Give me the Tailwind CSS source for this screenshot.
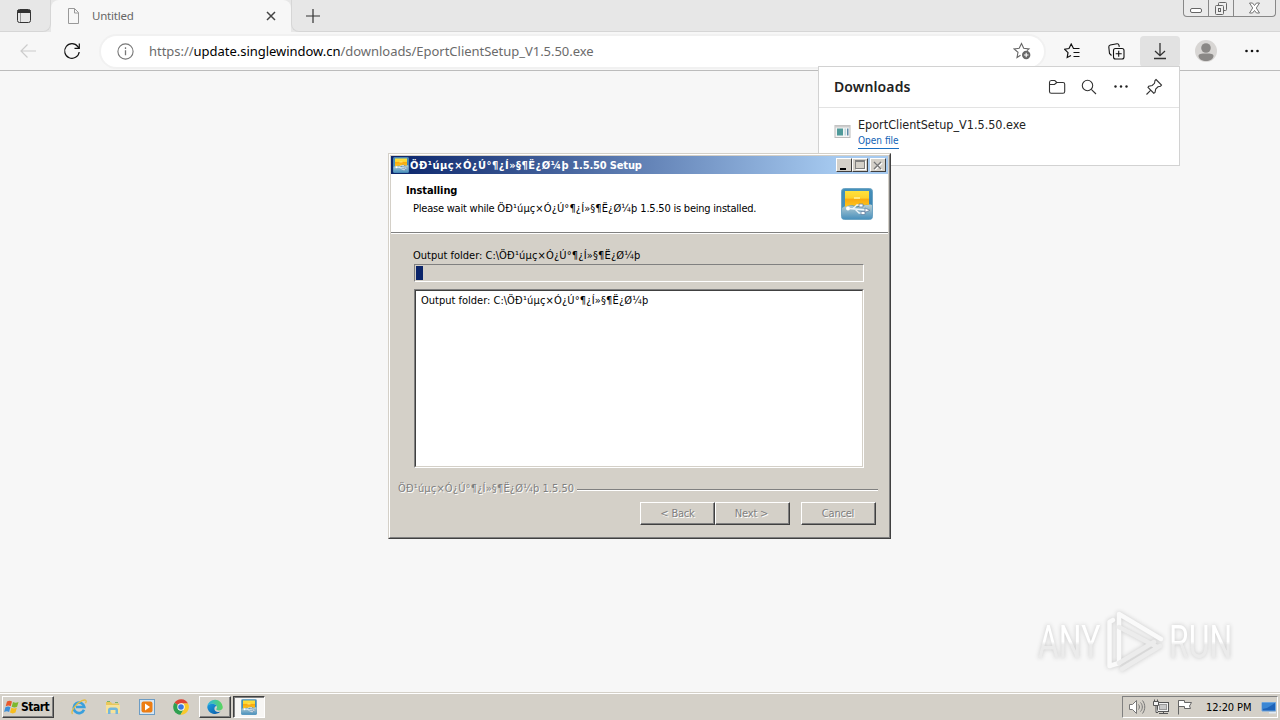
<!DOCTYPE html>
<html lang="en">
<head>
  <meta charset="UTF-8" />
  <meta name="viewport" content="width=device-width, initial-scale=1.0"/>
  <title>Untitled</title>
  <script src="https://cdn.jsdelivr.net/npm/@tailwindcss/browser@4"></script>
</head>
<body class="relative flex flex-col w-[1280px] h-[720px] overflow-hidden bg-[#f7f7f7] font-['DejaVu_Sans_Condensed','DejaVu_Sans',sans-serif] text-[11px] text-black whitespace-nowrap">

  <!-- Shared icons -->
  <svg class="absolute w-0 h-0">
    <defs>
      <linearGradient id="frame" x1="0" y1="0" x2="1" y2="1"><stop offset="0" stop-color="#3f8fbb"/><stop offset=".4" stop-color="#4a92bb"/><stop offset="1" stop-color="#2f7cae"/></linearGradient>
      <linearGradient id="sun" x1="0" y1="0" x2="0" y2="1"><stop offset="0" stop-color="#ffe23c"/><stop offset=".45" stop-color="#fdd22c"/><stop offset=".5" stop-color="#f9a90f"/><stop offset="1" stop-color="#ffc61c"/></linearGradient>
      <linearGradient id="haze" x1="0" y1="0" x2="0" y2="1"><stop offset="0" stop-color="#b9cfd4"/><stop offset="1" stop-color="#4a91bd"/></linearGradient>
      <linearGradient id="edge" x1="0" y1="0" x2="1" y2="1"><stop offset="0" stop-color="#1b9de2"/><stop offset="1" stop-color="#0c59a4"/></linearGradient>
      <linearGradient id="edgeTop" x1="0" y1="0" x2="1" y2="0"><stop offset="0" stop-color="#2cb5e8"/><stop offset="1" stop-color="#5bd65a"/></linearGradient>
    </defs>
    <symbol id="app" viewBox="0 0 32 32">
      <rect x=".5" y=".5" width="31" height="31" rx="3" fill="url(#frame)" stroke="#6fa5c4"/>
      <path d="M1 20c5-3 9-3 13-1s10-4 17-2v12c0 1.500-1 2-2 2H3c-1.500 0-2-.8-2-2z" fill="url(#haze)"/>
      <path d="M4 3h24v14c-6-1-8 2-13 1s-7-1-11 1z" fill="url(#sun)"/>
      <path d="M13 10h6" stroke="#fff3a0" stroke-width="1.500"/>
      <circle cx="7" cy="20.500" r="2" fill="#fff"/>
      <path d="M8 20.500l17 1.500M12 20.500l4-3.500h4M14 21l4 4h4" fill="none" stroke="#eef6fb" stroke-width="1.300"/>
      <path d="M18 16h4v3h-4zM20 23.500h4v3h-4zM24 20l5 2.300-5 2z" fill="#fff" stroke="#6784a5" stroke-width=".8"/>
    </symbol>
  </svg>

  <!-- Tab strip -->
  <header class="flex h-[32px] shrink-0 bg-[#e7e7e7]">
    <div class="flex w-[51px] justify-center pt-[8px] rounded-br-lg border-r border-b border-[#d6d6d6]">
      <svg class="w-4 h-4 -ml-[2px]" viewBox="0 0 16 16" fill="none" stroke="#333"><rect x="1.500" y="1.500" width="13" height="13" rx="2"/><path d="M1.500 3.500h13" stroke-width="3"/><path d="M4.500 5v9" stroke="#999"/></svg>
    </div>
    <div class="flex w-[240px] items-center rounded-t-lg bg-[#f7f7f7] pl-[15px] pr-[13px]">
      <svg class="w-4 h-4" viewBox="0 0 16 16" fill="none" stroke="#999"><path d="M2.500.500h6l4 4v11h-10zM8.500.500v4.500h4"/></svg>
      <span class="ml-[10px] font-['Noto_Sans',sans-serif] text-[11.500px] tracking-[-0.2px] text-[#666]">Untitled</span>
      <svg class="ml-auto w-[14px] h-[14px]" viewBox="0 0 14 14" stroke="#444" stroke-width="1.500"><path d="M3 3l8 8M11 3l-8 8"/></svg>
    </div>
    <div class="flex flex-1 justify-between rounded-bl-lg border-l border-b border-[#d6d6d6] pl-[13px] pr-[4px]">
      <svg class="mt-[8px] w-4 h-4" viewBox="0 0 16 16" stroke="#333" stroke-width="1.200"><path d="M1 8h14M8 1v14"/></svg>
      <div class="flex w-[93px] h-[17px] border border-t-0 border-[#888] rounded-b-[4px] bg-[#ebebeb]">
        <div class="w-[25px] border-r border-[#888] pl-[5px] pt-[7px]"><svg class="w-[14px] h-[7px]" viewBox="0 0 14 7" fill="#fff" stroke="#666"><rect x="1.500" y="1.500" width="11" height="4" rx="1.500"/></svg></div>
        <div class="w-[25px] border-r border-[#888] pl-[4px] pt-[1px]"><svg class="w-[16px] h-[14px]" viewBox="0 0 16 14" fill="#eee" stroke="#666"><rect x="5.500" y="1.500" width="8" height="8" rx="1"/><rect x="2.500" y="4.500" width="8" height="9" rx="1"/><rect x="5.500" y="7.500" width="2" height="3"/></svg></div>
        <div class="flex-1 pl-[14px] pt-[2px]"><svg class="w-[13px] h-[12px]" viewBox="0 0 13 12" fill="#fff" stroke="#666" stroke-width=".9"><path d="M1.500 1h3l2 2.500L8.500 1h3L8.300 6l3.200 5h-3L6.500 8.500 4.500 11h-3L4.700 6z"/></svg></div>
      </div>
    </div>
  </header>

  <!-- Toolbar -->
  <nav class="flex h-[39px] shrink-0 items-center border-b border-[#bcbcbc] bg-[#f7f7f7] pl-[19px]">
    <svg class="w-[18px] h-[18px]" viewBox="0 0 18 18" fill="none" stroke="#ccc" stroke-width="1.200"><path d="M17 9H2M8.500 2.500L2 9l6.500 6.500"/></svg>
    <svg class="ml-[26px] w-[18px] h-[18px]" viewBox="0 0 18 18" fill="none" stroke="#111" stroke-width="1.200"><path d="M16.200 10A7.300 7.300 0 1 1 14.800 4.600L16 6.200M16.300 1.500V6.300H11.500"/></svg>
    <div class="flex w-[943px] h-[31px] ml-[20px] items-center rounded-full bg-white pl-[16px] pr-[13px] shadow-[0_0_0_2px_#f1f1f1]">
      <svg class="w-[17px] h-[17px]" viewBox="0 0 17 17" fill="none" stroke="#777" stroke-width="1.100"><circle cx="8.500" cy="8.500" r="7.600"/><path d="M8.500 7.200v5M8.500 4.300v1.600" stroke-width="1.300"/></svg>
      <p class="ml-[15px] pt-px font-['Noto_Sans',sans-serif] text-[13px] tracking-[-0.03px] text-[#6b6b6b]">https://<span class="text-black">update.singlewindow.cn</span>/downloads/EportClientSetup_V1.5.50.exe</p>
      <svg class="ml-auto w-[18px] h-[18px]" viewBox="0 0 18 18" fill="none" stroke="#666" stroke-width="1.100"><path d="M7.500 13.200L4 15.500l1-5.200L1 6.900l5.200-.6L8.500 1.500l2.200 4.800 5.300.6-2 1.800"/><circle cx="13.200" cy="13" r="4.200" fill="#666" stroke="none"/><path d="M10.900 13h4.600M13.200 10.700v4.600" stroke="#fff"/></svg>
    </div>
    <svg class="ml-[20px] w-4 h-4" viewBox="0 0 16 16" fill="none" stroke="#111" stroke-width="1.200"><path d="M7 12.500L3.200 14.500 4 9.600.5 6.200 5 5.500 7.200 1l2.300 4.500H15.500M9.500 9.500h6M9.500 13.500h6"/></svg>
    <svg class="ml-[28px] w-[17px] h-[17px]" viewBox="0 0 17 17" fill="none" stroke="#111" stroke-width="1.100"><path d="M3.500 12.500L1.500 10.500.8 4C.7 2.800 1.300 2.300 2.300 2L9 .8c1.200-.1 1.800.4 2 1.500l.3 1.500"/><rect x="5.500" y="5.500" width="10.500" height="10.500" rx="2"/><path d="M10.700 7.700v6M7.700 10.700h6"/></svg>
    <div class="flex w-[40px] h-[31px] ml-[15px] items-center justify-center rounded bg-[#e2e2e2]">
      <svg class="w-[14px] h-[18px]" viewBox="0 0 14 18" fill="none" stroke="#333" stroke-width="1.300"><path d="M7 1v12.500M2 9l5 4.700L12 9M1 16.500h12"/></svg>
    </div>
    <svg class="ml-[15px] w-[22px] h-[22px]" viewBox="0 0 22 22" fill="#8a8886"><circle cx="11" cy="11" r="11" fill="#d8d6d4"/><circle cx="11" cy="8" r="4.800"/><path d="M3.500 16c0-2 2.500-2.500 7.500-2.500s7.500.5 7.500 2.500c0 3-4 5-7.500 5s-7.500-2-7.500-5z"/></svg>
    <svg class="ml-[27px] w-4 h-4" viewBox="0 0 16 16" fill="#111"><circle cx="2.500" cy="8" r="1.300"/><circle cx="8" cy="8" r="1.300"/><circle cx="13.500" cy="8" r="1.300"/></svg>
  </nav>

  <main class="flex-1"></main>

  <!-- Downloads flyout -->
  <section class="absolute left-[818px] top-[66px] w-[362px] h-[100px] border border-[#d2d2d2] bg-white">
    <div class="flex h-[41px] items-center border-b border-[#e3e3e3] pl-[15px] pr-[16px]">
      <h2 class="-mt-[2px] font-['Noto_Sans',sans-serif] text-[14px] font-semibold tracking-[0.1px] text-[#222]">Downloads</h2>
      <svg class="ml-auto w-[18px] h-4" viewBox="0 0 18 16" fill="none" stroke="#333" stroke-width="1.100"><path d="M1.500 12.500v-9c0-1.200.6-2 1.800-2h3.500l2 2h6.200c1 0 1.700.7 1.700 1.700v7.300c0 1-.7 1.800-1.700 1.800H3.300c-1.100 0-1.800-.7-1.800-1.800zM1.500 5.500h5l2.300-2"/></svg>
      <svg class="ml-[15px] w-4 h-4" viewBox="0 0 16 16" fill="none" stroke="#333" stroke-width="1.100"><circle cx="6.500" cy="6.500" r="5.200"/><path d="M10.300 10.300l4.700 4.700"/></svg>
      <svg class="ml-[16px] w-4 h-4" viewBox="0 0 16 16" fill="#222"><circle cx="2.500" cy="7.500" r="1.200"/><circle cx="8" cy="7.500" r="1.200"/><circle cx="13.500" cy="7.500" r="1.200"/></svg>
      <svg class="ml-[16px] w-[18px] h-[18px]" viewBox="0 0 18 18" fill="none" stroke="#333" stroke-width="1.100"><path d="M11 1.500l5.500 5.500-1 1.200-2.500.6-2.300 2.300-.7 3.400-1.200.7L3 9.500l.7-1.200 3.500-.8 2.300-2.200.5-2.800zM5.800 12.200L1.500 16.500"/></svg>
    </div>
    <div class="flex pl-[15px] pt-[8px]">
      <svg class="mt-[8px] w-[17px] h-[15px]" viewBox="0 0 17 15"><rect x="1" y="1.500" width="15" height="12" fill="#f4f4f4" stroke="#bbb"/><path d="M1 2.500h15" stroke="#ccc" stroke-width="2"/><path d="M3 4.500h6v7H3z" fill="#4f9a9a"/><path d="M10.500 4.500h1.500v7h-1.500z" fill="#bcd9dd"/><path d="M13 4.500h1.500v7H13z" fill="#5c89a8"/></svg>
      <div class="ml-[7px]">
        <p class="h-[19px] text-[12.500px] leading-[18px] text-[#222]">EportClientSetup_V1.5.50.exe</p>
        <p class="w-fit h-[14px] border-b border-[#1a6fc0] text-[10px] leading-[12px] text-[#0f62b5]">Open file</p>
      </div>
    </div>
  </section>

  <!-- Installer window -->
  <section class="absolute left-[388px] top-[153px] w-[503px] h-[386px] border border-l-[#d4d0c8] border-t-[#d4d0c8] border-r-[#404040] border-b-[#404040] bg-[#d4d0c8]">
    <div class="flex flex-col h-full border border-l-white border-t-white border-r-[#808080] border-b-[#808080] pt-[1px] px-px">
      <div class="flex h-[18px] shrink-0 items-center bg-linear-to-r/srgb from-[#0a246a] to-[#a6caf0] to-90% pl-[2px] pr-[2px]">
        <svg class="w-4 h-4"><use href="#app"/></svg>
        <span class="ml-[1px] pt-[2px] font-bold tracking-[-0.15px] text-white"><span class="tracking-[0.49px]">ÖÐ¹úµç×Ó¿Ú°¶¿Í»§¶Ë¿Ø¼þ</span> 1.5.50 Setup</span>
        <div class="flex ml-auto">
          <div class="w-4 h-[14px] border border-t-white border-l-white border-r-[#404040] border-b-[#404040] bg-[#d4d0c8] pl-[3px] pt-[9px]"><div class="w-[6px] h-[2px] bg-black"></div></div>
          <div class="w-4 h-[14px] border border-t-white border-l-white border-r-[#404040] border-b-[#404040] bg-[#d4d0c8] pl-[2px] pt-[1px]"><div class="w-[10px] h-[9px] border border-t-2 border-[#808080] shadow-[1px_1px_0_#fff]"></div></div>
          <div class="w-4 h-[14px] ml-[2px] border border-t-white border-l-white border-r-[#404040] border-b-[#404040] bg-[#d4d0c8] pl-[2px] pt-[2px]"><svg class="w-[10px] h-[9px]" viewBox="0 0 10 9" stroke-width="1.400"><path d="M2 2l7 7M9 2l-7 7" stroke="#fff"/><path d="M1 1l7 7M8 1l-7 7" stroke="#777"/></svg></div>
        </div>
      </div>

      <div class="flex h-[59px] shrink-0 justify-between border-b border-[#808080] bg-white pl-[15px] pr-[15px]">
        <div class="pt-[9px]">
          <h1 class="h-[18px] leading-[15px] font-bold tracking-[-0.1px]">Installing</h1>
          <p class="ml-[7px] leading-[15px] tracking-[-0.22px]">Please wait while <span class="tracking-[0.1px]">ÖÐ¹úµç×Ó¿Ú°¶¿Í»§¶Ë¿Ø¼þ</span> 1.5.50 is being installed.</p>
        </div>
        <svg class="mt-[14px] w-8 h-8"><use href="#app"/></svg>
      </div>

      <div class="flex flex-col flex-1 border-t border-white pl-[23px] pr-[24px]">
        <p class="mt-[14px] h-[16px] -ml-px leading-[15px]">Output folder: C:\<span class="tracking-[0.16px]">ÖÐ¹úµç×Ó¿Ú°¶¿Í»§¶Ë¿Ø¼þ</span></p>
        <div class="h-[18px] border border-t-[#808080] border-l-[#808080] border-r-white border-b-white p-px"><div class="w-[7px] h-[14px] bg-[#0a246a]"></div></div>
        <div class="mt-[7px] h-[179px] border border-t-[#808080] border-l-[#808080] border-r-white border-b-white">
          <div class="h-full border border-t-[#404040] border-l-[#404040] border-r-[#d4d0c8] border-b-[#d4d0c8] bg-white pl-[5px] pt-[2px] leading-[15px]">Output folder: C:\<span class="tracking-[0.16px]">ÖÐ¹úµç×Ó¿Ú°¶¿Í»§¶Ë¿Ø¼þ</span></div>
        </div>
        <div class="flex -ml-4 -mr-[14px] mt-[12px] h-[16px] items-center">
          <span class="pt-[2px] text-[#808080] [text-shadow:1px_1px_0_#fff]"><span class="tracking-[0.16px]">ÖÐ¹úµç×Ó¿Ú°¶¿Í»§¶Ë¿Ø¼þ</span> 1.5.50</span>
          <div class="flex-1 h-[2px] mt-[3px] ml-[3px] border-t border-t-[#808080] border-b border-b-white"></div>
        </div>
        <div class="flex -mr-[12px] mt-[6px] justify-end text-[#808080] tracking-[-0.2px] [text-shadow:1px_1px_0_#fff]">
          <div class="w-[75px] h-[23px] border border-t-white border-l-white border-r-[#404040] border-b-[#404040] text-center leading-[22px] shadow-[inset_-1px_-1px_0_#808080]">&lt; Back</div>
          <div class="w-[75px] h-[23px] pr-[2px] border border-t-white border-l-white border-r-[#404040] border-b-[#404040] text-center leading-[22px] shadow-[inset_-1px_-1px_0_#808080]">Next &gt;</div>
          <div class="w-[75px] h-[23px] ml-[11px] pr-px border border-t-white border-l-white border-r-[#404040] border-b-[#404040] text-center leading-[22px] shadow-[inset_-1px_-1px_0_#808080]">Cancel</div>
        </div>
      </div>
    </div>
  </section>

  <!-- Watermark -->
  <div class="absolute left-[1038px] top-[606px] flex h-[70px] items-center drop-shadow-[0_0_2px_#c8c8c8]">
    <span class="w-[64px] origin-left scale-x-[.68] font-['Roboto',sans-serif] text-[47px] leading-none"><span class="bg-linear-to-b from-white from-50% to-[#ebebeb] to-56% bg-clip-text text-transparent">ANY</span></span>
    <svg class="ml-[4px] w-[60px] h-[66px]" viewBox="0 0 60 66" fill="none" stroke="#fafafa" stroke-width="4.500" stroke-linecap="round" stroke-linejoin="round"><path d="M7 12L3.500 14v44L13 55V6l42 25"/><path d="M13 19l38 20M13 55l35-21M16 61l38-23" stroke="#ececec"/></svg>
    <span class="w-[64px] ml-[3px] origin-left scale-x-[.68] font-['Roboto',sans-serif] text-[47px] leading-none"><span class="bg-linear-to-b from-white from-50% to-[#ebebeb] to-56% bg-clip-text text-transparent">RUN</span></span>
  </div>

  <!-- Taskbar -->
  <footer class="flex h-[28px] shrink-0 items-start border-t border-[#d4d0c8] bg-[#d4d0c8] pl-[2px] pr-[2px] shadow-[inset_0_1px_0_#fff]">
    <div class="flex w-[52px] h-[22px] mt-[3px] items-center border border-t-white border-l-white border-r-[#404040] border-b-[#404040] pl-px shadow-[inset_-1px_-1px_0_#808080]">
      <svg class="w-4 h-4 shrink-0" viewBox="0 0 16 16"><path d="M3 2.500c2-1.200 3.500-1 5 0L6.700 7.300c-1.500-1-3-1-5 0z" fill="#e9592b"/><path d="M9 3c1.800 1 3.500 1 5.500 0l-1.400 4.800c-1.800 1-3.500.9-5.400 0z" fill="#7db82f"/><path d="M1.400 8.300c2-1.100 3.600-1 5 0l-1.300 4.800c-1.500-1-3-1-5 0z" fill="#3d8fd8"/><path d="M7.400 8.800c1.900 1 3.600 1 5.400 0l-1.300 4.800c-2 1.100-3.700 1-5.500 0z" fill="#f7bd1e"/></svg>
      <span class="ml-px font-bold text-[12px] tracking-[-0.5px]">Start</span>
    </div>
    <div class="flex ml-[17px] mt-[6px] gap-[18px]">
      <svg class="w-4 h-4" viewBox="0 0 16 16" fill="none"><path d="M13 10.800A5.300 5.300 0 1 1 13.300 8H5" stroke="#3aa0dd" stroke-width="2.600"/><path d="M1.500 15C-1 12 6 4 11 1.700c4-1.700 5 0 3.500 2.600" stroke="#e4bd44" stroke-width="1.300"/></svg>
      <svg class="w-4 h-4" viewBox="0 0 16 16"><path d="M1 3h5l1 1.500h7V13H1z" fill="#e9c75b"/><path d="M2 2h3v1H2zM10 3h3v1h-3z" fill="#79b36b"/><path d="M1 6h14v8H1z" fill="#f7e29a"/><path d="M3 15v-4c0-1.500 1-2.500 2.500-2.500h5C12 8.500 13 9.500 13 11v4h-2.500v-4h-5v4z" fill="#73b7dc"/></svg>
      <svg class="w-4 h-4" viewBox="0 0 16 16"><rect x=".5" y=".5" width="15" height="15" fill="#d7e6f3" stroke="#6c9cc4"/><rect x="2.500" y="2.500" width="11" height="11" rx="2" fill="#ed7d13"/><path d="M6 4.500v7l5-3.500z" fill="#fff"/></svg>
      <svg class="w-4 h-4" viewBox="0 0 16 16"><path d="M8 8L1.500 3.700A7.800 7.800 0 0 1 15 4.500H8z" fill="#dd4535"/><path d="M8 8L1.500 3.700A7.800 7.800 0 0 0 7.500 15.800L11 10z" fill="#2fa050"/><path d="M8 4.500h7A7.800 7.800 0 0 1 7.500 15.800L11 10z" fill="#f8c92c"/><circle cx="8" cy="8" r="3.700" fill="#fff"/><circle cx="8" cy="8" r="2.800" fill="#3978e0"/></svg>
    </div>
    <div class="flex w-[32px] h-[22px] ml-[10px] mt-[3px] items-center justify-center border border-t-white border-l-white border-r-[#404040] border-b-[#404040] shadow-[inset_-1px_-1px_0_#808080]">
      <svg class="w-4 h-4" viewBox="0 0 16 16"><path d="M.3 7.500A7.800 7.800 0 0 1 15.800 8c0 2-1.500 3.500-4 3.500-1.500 0-2.500-.7-2.500-1.200 0-.6.700-.8.700-2C10 6.500 8 4.800 5.500 4.800 3 4.800.8 6 .3 7.500z" fill="url(#edgeTop)"/><path d="M.2 8C.5 6 3 4.800 5.500 4.800c2 0 3.500 1 4 2.200C7 7 6 12.500 10.500 13c1.500.2 2.700-.4 3.600-1A7.800 7.800 0 0 1 .2 8z" fill="url(#edge)"/></svg>
    </div>
    <div class="flex w-[32px] h-[22px] ml-[2px] mt-[3px] items-center justify-center border border-t-[#404040] border-l-[#404040] border-r-white border-b-white bg-[#f7f6f4] shadow-[inset_1px_1px_0_#808080]">
      <svg class="w-4 h-4"><use href="#app"/></svg>
    </div>
    <div class="flex w-[156px] h-[22px] ml-auto mt-[3px] items-center border border-t-[#808080] border-l-[#808080] border-r-white border-b-white pl-[5px]">
      <svg class="w-[18px] h-4" viewBox="0 0 18 16" fill="#fff" stroke="#777"><path d="M1.500 5.500h3l4-4v13l-4-4h-3z"/><path d="M10.500 5.500c1.200 1.500 1.200 3.500 0 5M12.500 3.500c2.400 2.500 2.400 6.500 0 9M14.500 1.500c3 4 3 9 0 13" fill="none"/></svg>
      <svg class="ml-[7px] w-4 h-4" viewBox="0 0 16 16" fill="#f3f3f3" stroke="#555"><rect x="4.500" y="3.500" width="11" height="9"/><rect x="6.500" y="5.500" width="7" height="5" fill="#c8c8c8" stroke="#999"/><path d="M6 14.500h9M10.500 13v1"/><path d="M.5 2.500h5v4h-5zM1.500.5v2M4.500.5v2M3 6.500v7h2" /></svg>
      <svg class="ml-[8px] w-4 h-4" viewBox="0 0 16 16" fill="#fff" stroke="#666"><path d="M1.500 15.500V1.500M1.500 1.500h6v2h7L12.500 7l1 2.500h-6v-2h-6z"/></svg>
      <span class="ml-[13px] pt-[2px] tracking-[-0.1px]">12:20 PM</span>
      <svg class="ml-auto w-[16px] h-[14px]" viewBox="0 0 16 14"><path d="M1 2.500h13.500v8.500H1z" fill="#1d62b8" stroke="#6ca4de"/><path d="M1.500 3h12.500L6 8l-4.500 1z" fill="#3a86d4"/><path d="M8 12h7v1.500H8z" fill="#dfe9f3"/></svg>
    </div>
  </footer>
</body>
</html>
